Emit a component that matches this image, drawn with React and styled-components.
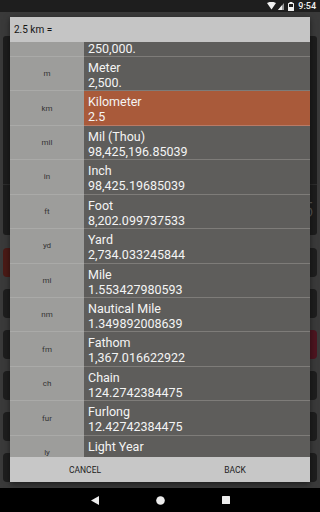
import React from 'react'
import styled, { createGlobalStyle } from 'styled-components'

const GlobalStyle = createGlobalStyle`
    html, body {
        margin: 0;
        padding: 0;
        background: #000;
        font-family: Roboto, "Liberation Sans", sans-serif;
    }
`
const Screen = styled.div`
    width: 320px;
    height: 512px;
    display: flex;
    flex-direction: column;
    position: relative;
    overflow: hidden;
`
const StatusBar = styled.div`
    height: 12px;
    background-color: #1e1e1e;
    display: flex;
    align-items: center;
    justify-content: flex-end;
    gap: 2px;
    padding-right: 4px;
`
const Clock = styled.span`
    color: #f0f0f0;
    font-size: 9px;
    font-weight: 500;
    margin-left: 2px;
`
const AppArea = styled.div`
    flex: 1;
    background-color: #3a3a3a;
    padding: 24px 3px 5px 3px;
    display: flex;
    flex-direction: column;
`
const Display = styled.div`
    height: 199px;
    background-color: #1d1d1d;
    border-radius: 3px;
    display: flex;
    flex-direction: column;
`
const DisplayTop = styled.div`
    flex: 1;
    border-bottom: 1px solid #2c2c2c;
`
const DisplayValue = styled.div`
    height: 50px;
    display: flex;
    align-items: center;
    justify-content: flex-end;
    padding-right: 4px;
    color: #5a5a5a;
    font-size: 20px;
    font-weight: 300;
`
const Keypad = styled.div`
    margin-top: 13px;
    display: grid;
    grid-template-columns: repeat(4, 1fr);
    grid-auto-rows: 29px;
    row-gap: 12px;
    column-gap: 6px;
`
const Key = styled.div`
    background-color: ${p => p.$tone === 'red' ? '#4a1a16' : p.$tone === 'wine' ? '#4d1520' : '#1e1e1e'};
    border-radius: 4px;
`
const NavBar = styled.div`
    height: 24px;
    background-color: #000;
    display: flex;
    align-items: center;
    justify-content: center;
    gap: 57px;
`
const Dialog = styled.div`
    position: absolute;
    left: 10px;
    top: 17px;
    width: 300px;
    height: 465px;
    display: flex;
    flex-direction: column;
    box-shadow: 0 2px 6px rgba(0, 0, 0, 0.5);
`
const Header = styled.div`
    height: 25px;
    background-color: #c5c5c5;
    display: flex;
    align-items: center;
    padding-left: 4px;
    font-size: 10px;
    color: #141414;
`
const List = styled.div`
    flex: 1;
    overflow: hidden;
    background-color: #5e5d5b;
`
const ListInner = styled.div`
    margin-top: -19.5px;
`
const Row = styled.div`
    height: 34.45px;
    box-sizing: border-box;
    display: grid;
    grid-template-columns: 74px 1fr;
`
const Abbr = styled.div`
    background-color: #9d9d9b;
    border-bottom: 1px solid #aaaaa8;
    display: flex;
    align-items: center;
    justify-content: center;
    font-size: 8px;
    color: #333;
`
const Info = styled.div`
    background-color: ${p => p.$active ? '#a95a3a' : '#5e5d5b'};
    border-bottom: 1px solid ${p => p.$active ? '#b97a66' : '#7e7c79'};
    padding: 3px 0 0 4px;
    color: #f4f4f4;
    font-size: 12.5px;
    line-height: 15px;
    white-space: nowrap;
    overflow: hidden;
`
const Footer = styled.div`
    height: 25px;
    background-color: #c7c7c7;
    display: grid;
    grid-template-columns: 1fr 1fr;
`
const FooterButton = styled.button`
    border: none;
    background: none;
    font-family: inherit;
    font-size: 8.5px;
    color: #222;
    padding: 0;
    cursor: pointer;
`

const units = [
    { abbr: 'cm', name: 'Centimeter', value: '250,000.' },
    { abbr: 'm', name: 'Meter', value: '2,500.' },
    { abbr: 'km', name: 'Kilometer', value: '2.5', active: true },
    { abbr: 'mil', name: 'Mil (Thou)', value: '98,425,196.85039' },
    { abbr: 'in', name: 'Inch', value: '98,425.19685039' },
    { abbr: 'ft', name: 'Foot', value: '8,202.099737533' },
    { abbr: 'yd', name: 'Yard', value: '2,734.033245844' },
    { abbr: 'mi', name: 'Mile', value: '1.553427980593' },
    { abbr: 'nm', name: 'Nautical Mile', value: '1.349892008639' },
    { abbr: 'fm', name: 'Fathom', value: '1,367.016622922' },
    { abbr: 'ch', name: 'Chain', value: '124.2742384475' },
    { abbr: 'fur', name: 'Furlong', value: '12.42742384475' },
    { abbr: 'ly', name: 'Light Year', value: '2.642508653e-13' },
]

const keyTones = [
    'red', '', '', '',
    '', '', '', '',
    '', '', '', 'wine',
    '', '', '', '',
    '', '', '', '',
    '', '', '', '',
]

const App = () => {
  return (
    <Screen>
        <GlobalStyle />
        <StatusBar>
            <svg width="9" height="8" viewBox="0 0 9 8">
                <path d="M0 1 Q4.5 -1.5 9 1 L4.5 7.5 Z" fill="#f0f0f0" />
            </svg>
            <svg width="6" height="7" viewBox="0 0 6 7">
                <path d="M0 7 L6 0 L6 7 Z" fill="#9a9a9a" />
                <path d="M0 7 L4 2.3 L4 7 Z" fill="#f0f0f0" />
            </svg>
            <svg width="6" height="9" viewBox="0 0 6 9" style={{ marginLeft: 2 }}>
                <rect x="1.5" y="0" width="3" height="1" fill="#f0f0f0" />
                <rect x="0" y="1" width="6" height="8" rx="0.5" fill="#f0f0f0" />
                <rect x="1" y="2" width="4" height="3" fill="#1e1e1e" />
            </svg>
            <Clock>9:54</Clock>
        </StatusBar>
        <AppArea>
            <Display>
                <DisplayTop />
                <DisplayValue>2.5</DisplayValue>
            </Display>
            <Keypad>
                {keyTones.map((tone, i) => (
                    <Key key={i} $tone={tone} />
                ))}
            </Keypad>
        </AppArea>
        <NavBar>
            <svg width="8" height="9" viewBox="0 0 8 9">
                <path d="M0 4.5 L8 0 L8 9 Z" fill="#ececec" />
            </svg>
            <svg width="9" height="9" viewBox="0 0 9 9">
                <circle cx="4.5" cy="4.5" r="4.3" fill="#ececec" />
            </svg>
            <svg width="8" height="8" viewBox="0 0 8 8">
                <rect x="0" y="0" width="8" height="8" rx="0.5" fill="#ececec" />
            </svg>
        </NavBar>
        <Dialog>
            <Header>2.5 km =</Header>
            <List>
                <ListInner>
                    {units.map(u => (
                        <Row key={u.abbr}>
                            <Abbr>{u.abbr}</Abbr>
                            <Info $active={u.active}>
                                <div>{u.name}</div>
                                <div>{u.value}</div>
                            </Info>
                        </Row>
                    ))}
                </ListInner>
            </List>
            <Footer>
                <FooterButton>CANCEL</FooterButton>
                <FooterButton>BACK</FooterButton>
            </Footer>
        </Dialog>
    </Screen>
  )
}

export default App
